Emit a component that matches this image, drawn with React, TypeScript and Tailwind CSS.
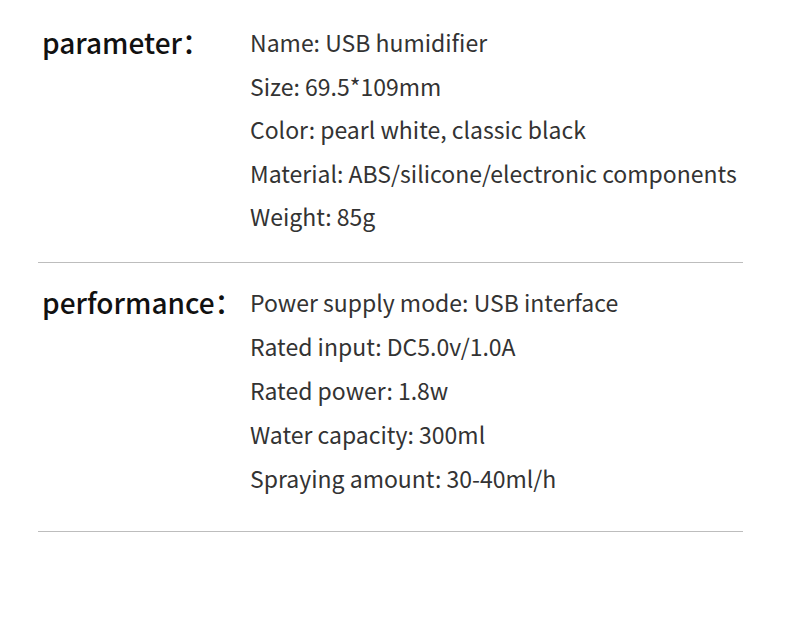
const sections = [
  {
    title: "parameter",
    items: [
      "Name: USB humidifier",
      "Size: 69.5*109mm",
      "Color: pearl white, classic black",
      "Material: ABS/silicone/electronic components",
      "Weight: 85g",
    ],
  },
  {
    title: "performance",
    items: [
      "Power supply mode: USB interface",
      "Rated input: DC5.0v/1.0A",
      "Rated power: 1.8w",
      "Water capacity: 300ml",
      "Spraying amount: 30-40ml/h",
    ],
  },
]

export default function App() {
  return (
    <div
      className="h-[626px] w-[800px] bg-white"
      style={{ fontFamily: '"Noto Sans CJK SC", "Noto Sans", sans-serif' }}
    >
      <div className="pl-[38px] pt-[21px]">
        <div className="w-[705px]">
          <SpecBlock title={sections[0].title} items={sections[0].items} leading="leading-[43.5px]" />
          <div className="mt-[23px] h-px bg-[#bdbdbd]" />
          <div className="mt-[17px]">
            <SpecBlock title={sections[1].title} items={sections[1].items} leading="leading-[44px]" />
          </div>
          <div className="mt-[31px] h-px bg-[#bdbdbd]" />
        </div>
      </div>
    </div>
  )
}

function SpecBlock({ title, items, leading }: { title: string; items: string[]; leading: string }) {
  return (
    <div className={`flex ${leading}`}>
      <div className="w-[212px] shrink-0 pl-[4px] text-[28px] font-medium text-[#111]">
        {title}：
      </div>
      <ul className="text-[23px] text-[#333]">
        {items.map((item) => (
          <li key={item}>{item}</li>
        ))}
      </ul>
    </div>
  )
}
